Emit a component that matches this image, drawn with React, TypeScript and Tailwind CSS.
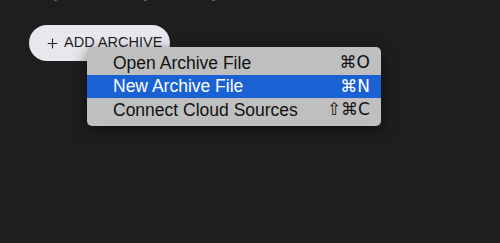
import { Plus } from "lucide-react";

const items = [
  { label: "Open Archive File", keys: "⌘O", active: false },
  { label: "New Archive File", keys: "⌘N", active: true },
  { label: "Connect Cloud Sources", keys: "⇧⌘C", active: false },
];

export default function App() {
  return (
    <div className="relative w-[500px] h-[243px] overflow-hidden bg-[#1e1e1e] font-['Liberation_Sans','DejaVu_Sans',sans-serif]">
      {/* hint line, scrolled mostly out of view */}
      <p className="-mt-[17px] pl-[30px] text-[14px] leading-[20px] text-[#6f6f6f] whitespace-nowrap">
        Easy access to any folder, anytime
      </p>

      <button className="mt-[22px] ml-[29px] flex h-[36px] w-[141px] items-center gap-[4px] rounded-full bg-[#e7e8ed] pl-[16px] text-[14.5px] text-[#1d1d1d]">
        <Plus size={15} strokeWidth={1.7} />
        <span>ADD ARCHIVE</span>
      </button>

      {/* dropdown */}
      <div className="absolute left-[87px] top-[47px] w-[294px] rounded-[5px] bg-[#bfbfbf] py-[4px] shadow-[0_4px_14px_rgba(0,0,0,0.5)]">
        {items.map((it) => (
          <div
            key={it.label}
            className={`flex h-[23.5px] items-center justify-between pl-[26px] pr-[11px] text-[17.5px] ${
              it.active ? "bg-[#1a62d3] text-white" : "text-[#111]"
            }`}
          >
            <span>{it.label}</span>
            <span className="font-['DejaVu_Sans',sans-serif] text-[17px]">{it.keys}</span>
          </div>
        ))}
      </div>
    </div>
  );
}
